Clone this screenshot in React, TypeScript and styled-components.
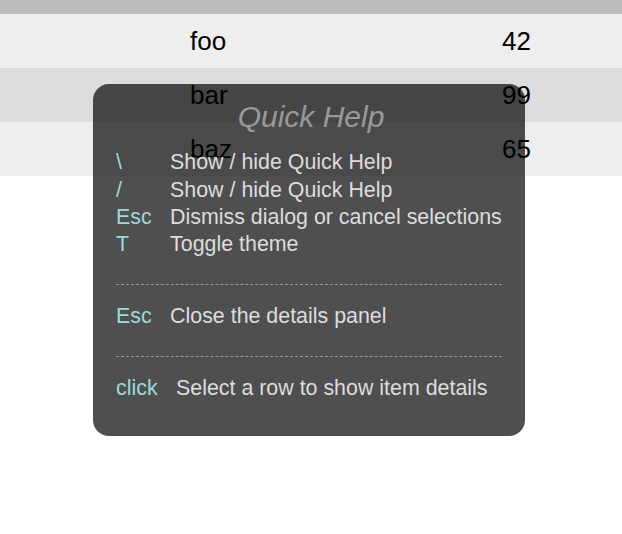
import React from "react";
import styled, { createGlobalStyle } from "styled-components";

const GlobalStyle = createGlobalStyle`
  html, body {
    margin: 0;
    padding: 0;
    background: #ffffff;
    font-family: "Liberation Sans", Arial, Helvetica, sans-serif;
  }
`;

const Page = styled.div`
  position: relative;
  width: 622px;
  height: 534px;
  overflow: hidden;
`;

const HeaderBar = styled.div`
  height: 14px;
  background: #bbbbbb;
`;

const Row = styled.div<{ $shade: string }>`
  height: 54px;
  background: ${(p) => p.$shade};
  display: flex;
  align-items: center;
  justify-content: space-between;
  padding: 0 91px 0 190px;
  font-size: 26px;
  color: #000;
`;

const Cell = styled.span`
  position: relative;
  z-index: 2;
`;

const Panel = styled.div`
  position: absolute;
  top: 84px;
  left: 93px;
  width: 432px;
  box-sizing: border-box;
  padding: 16px 23px 33px;
  border-radius: 16px;
  background: rgba(0, 0, 0, 0.69);
`;

const Title = styled.div`
  position: relative;
  z-index: 3;
  text-align: center;
  font-style: italic;
  font-size: 30px;
  line-height: 34.5px;
  color: #999999;
  padding-left: 4px;
  margin-bottom: 14.7px;
`;

const Section = styled.div`
  position: relative;
  z-index: 3;
  display: grid;
  grid-template-columns: auto 1fr;
  column-gap: 18.4px;
  font-size: 21.4px;
  line-height: 27.4px;
`;

const Key = styled.span`
  color: #9ddada;
`;

const Desc = styled.span`
  color: #dddddd;
  white-space: nowrap;
`;

const Divider = styled.div`
  position: relative;
  z-index: 3;
  border-top: 1px dashed #9a9a9a;
  margin: 25px 0 18.6px;
`;

const rows = [
  { name: "foo", value: 42, shade: "#eeeeee" },
  { name: "bar", value: 99, shade: "#dddddd" },
  { name: "baz", value: 65, shade: "#eeeeee" },
];

const sections: { key: string; desc: string }[][] = [
  [
    { key: "\\", desc: "Show / hide Quick Help" },
    { key: "/", desc: "Show / hide Quick Help" },
    { key: "Esc", desc: "Dismiss dialog or cancel selections" },
    { key: "T", desc: "Toggle theme" },
  ],
  [{ key: "Esc", desc: "Close the details panel" }],
  [{ key: "click", desc: "Select a row to show item details" }],
];

export default function App() {
  return (
    <>
      <GlobalStyle />
      <Page>
        <Panel>
          <Title>Quick Help</Title>
          {sections.map((sec, i) => (
            <React.Fragment key={i}>
              {i > 0 && <Divider />}
              <Section>
                {sec.map((item, j) => (
                  <React.Fragment key={j}>
                    <Key>{item.key}</Key>
                    <Desc>{item.desc}</Desc>
                  </React.Fragment>
                ))}
              </Section>
            </React.Fragment>
          ))}
        </Panel>
        <HeaderBar />
        {rows.map((r) => (
          <Row key={r.name} $shade={r.shade}>
            <Cell>{r.name}</Cell>
            <Cell>{r.value}</Cell>
          </Row>
        ))}
      </Page>
    </>
  );
}
